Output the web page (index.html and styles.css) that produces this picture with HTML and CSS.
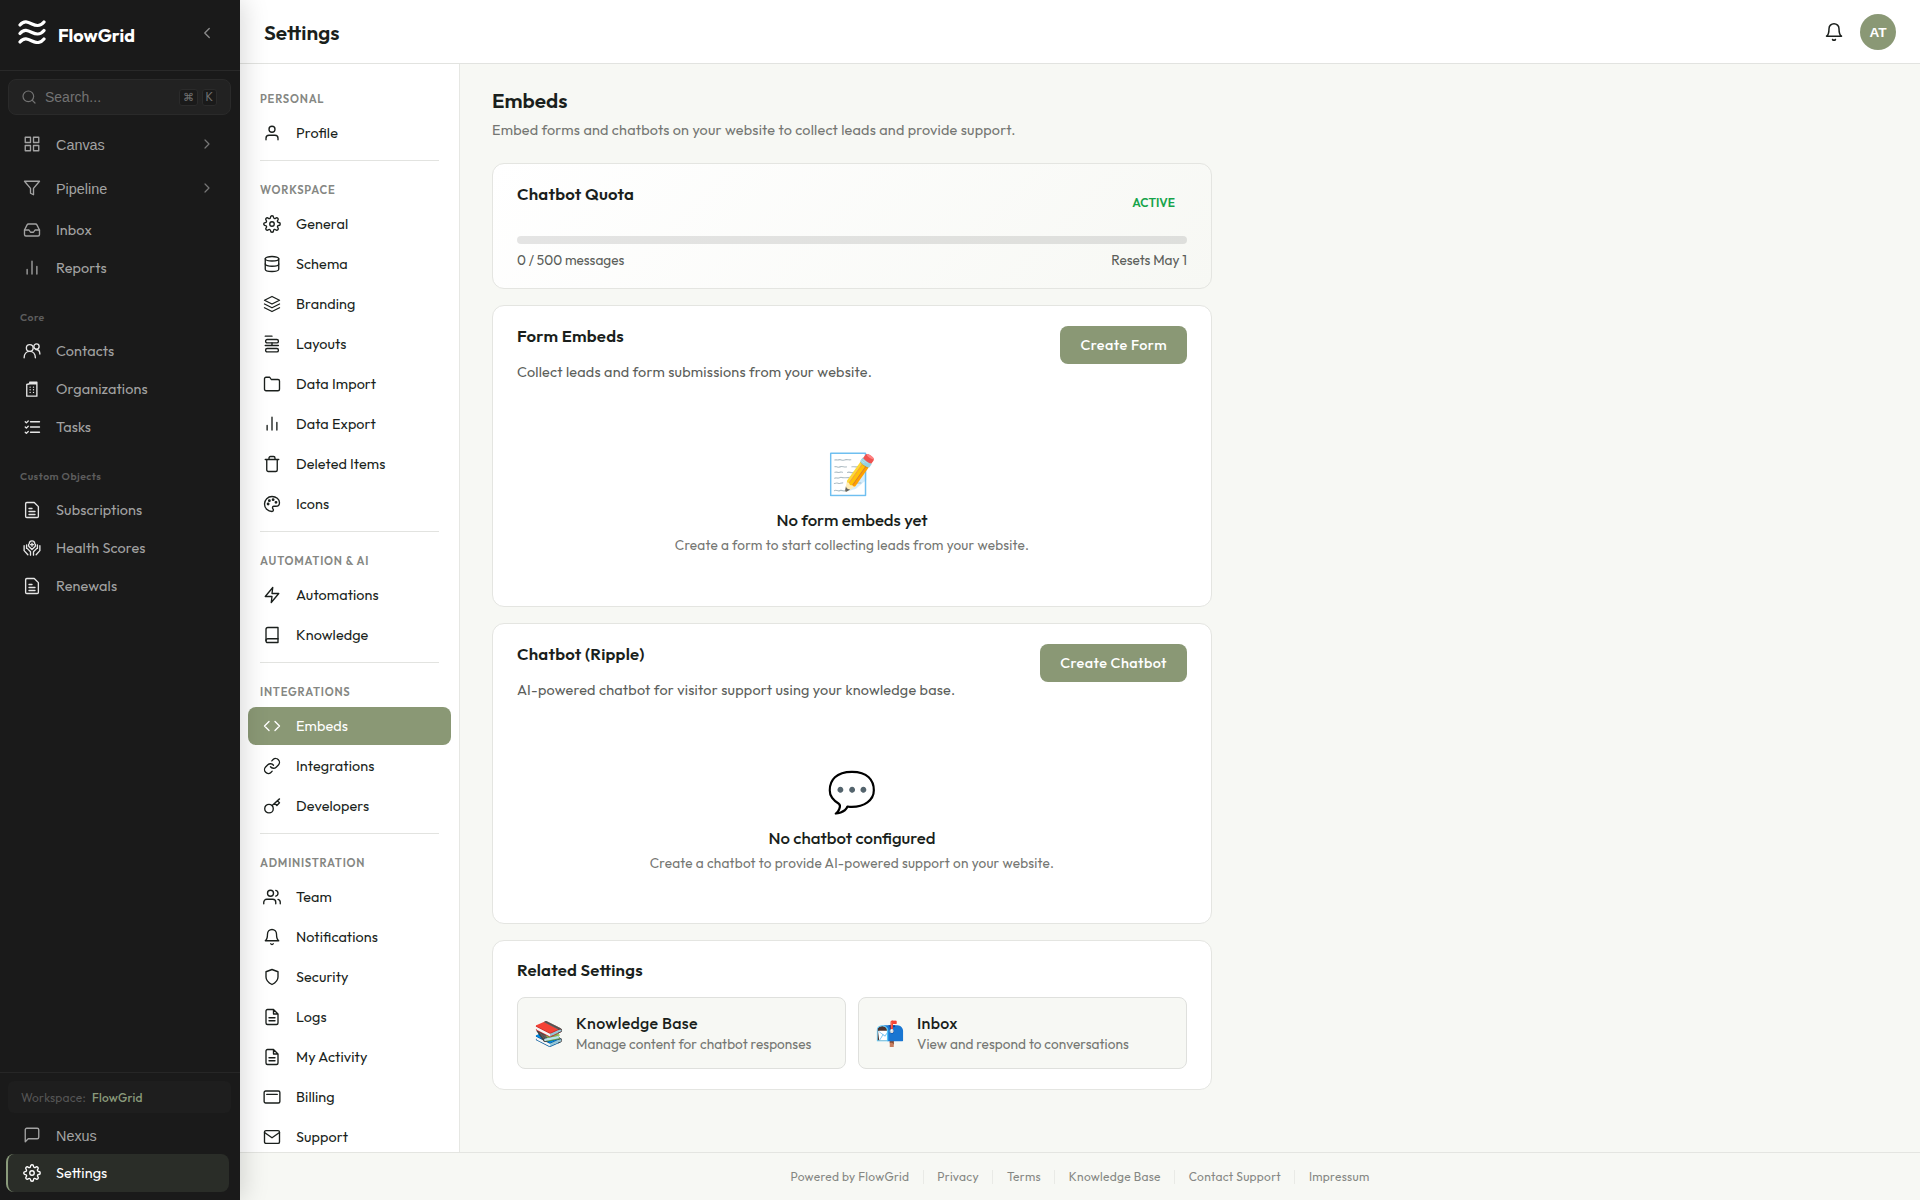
FILE: index.html
```html
<!DOCTYPE html>
<html lang="en">
<head>
<meta charset="utf-8">
<title>Settings - FlowGrid</title>
<link rel="stylesheet" href="styles.css">
</head>
<body>
<svg class="sprite" aria-hidden="true">
  <symbol id="i-search" viewBox="0 0 24 24"><circle cx="11" cy="11" r="8"/><path d="M21 21l-4.35-4.35"/></symbol>
  <symbol id="i-left" viewBox="0 0 24 24"><path d="M15 18l-6-6 6-6"/></symbol>
  <symbol id="i-right" viewBox="0 0 24 24"><path d="M9 18l6-6-6-6"/></symbol>
  <symbol id="i-grid" viewBox="0 0 24 24"><path d="M3 3h7v7H3zM14 3h7v7h-7zM14 14h7v7h-7zM3 14h7v7H3z"/></symbol>
  <symbol id="i-filter" viewBox="0 0 24 24"><path d="M22 3H2l8 9.460V19l4 2v-8.540z"/></symbol>
  <symbol id="i-inbox" viewBox="0 0 24 24"><path d="M22 12h-6l-2 3h-4l-2-3H2"/><path d="M5.450 5.110L2 12v6a2 2 0 0 0 2 2h16a2 2 0 0 0 2-2v-6l-3.450-6.890A2 2 0 0 0 16.760 4H7.240a2 2 0 0 0-1.790 1.110z"/></symbol>
  <symbol id="i-bars" viewBox="0 0 24 24"><path d="M18.500 20V10M12 20V3M5.500 20v-6"/></symbol>
  <symbol id="i-contacts" viewBox="0 0 24 24"><circle cx="9" cy="8" r="4.500"/><path d="M1.500 21c0-5 3-8.500 7.500-8.500s7.500 3.500 7.500 8.500"/><circle cx="18" cy="6" r="3.500"/><path d="M17 10c3.500 0 5.500 2 5.500 6"/></symbol>
  <symbol id="i-building" viewBox="0 0 24 24"><path d="M5 6l4-1V3h9.500v18.500h-13.500zM9 5h9"/><path d="M9.500 9.500v.01M14 9.500v.01M9.500 13v.01M14 13v.01M9.500 16.500v.01M14 16.500v.01"/></symbol>
  <symbol id="i-tasks" viewBox="0 0 24 24"><path d="M10 5h12M10 12h12M10 19h12M3 5l1.500 1.500L7 4M3 12l1.500 1.500L7 11M3 19l1.500 1.500L7 18"/></symbol>
  <symbol id="i-doc" viewBox="0 0 24 24"><path d="M15 2H5a1.500 1.500 0 0 0-1.500 1.500v17A1.500 1.500 0 0 0 5 22h14a1.500 1.500 0 0 0 1.500-1.500V7.500z"/><path d="M8 10h4M8 14h8M8 18h8"/></symbol>
  <symbol id="i-health" viewBox="0 0 24 24"><path d="M12 14l-3.800-3.800a2.900 2.900 0 0 1 .2-4.300q.3-3.400 3.600-3.400t3.600 3.400a2.900 2.900 0 0 1 .2 4.300z"/><path d="M12 5.500v4M10 7.500h4"/><path d="M1.500 9v6.500l5 5.500M10 21.500v-4.500l-4.500-4.500M4.800 8v4.500M22.500 9v6.500l-5 5.500M14 21.500v-4.500l4.500-4.500M19.200 8v4.500"/></symbol>
  <symbol id="i-message" viewBox="0 0 24 24"><path d="M21 15a2 2 0 0 1-2 2H7l-4 4V5a2 2 0 0 1 2-2h14a2 2 0 0 1 2 2z"/></symbol>
  <symbol id="i-cog" viewBox="0 0 24 24"><circle cx="12" cy="12" r="3"/><path d="M19.400 15a1.650 1.650 0 0 0 .33 1.820l.06.06a2 2 0 0 1 0 2.830 2 2 0 0 1-2.830 0l-.06-.06a1.650 1.650 0 0 0-1.820-.33 1.650 1.650 0 0 0-1 1.510V21a2 2 0 0 1-2 2 2 2 0 0 1-2-2v-.09A1.650 1.650 0 0 0 9 19.400a1.650 1.650 0 0 0-1.820.33l-.06.06a2 2 0 0 1-2.830 0 2 2 0 0 1 0-2.830l.06-.06a1.650 1.650 0 0 0 .33-1.820 1.650 1.650 0 0 0-1.510-1H3a2 2 0 0 1-2-2 2 2 0 0 1 2-2h.09A1.650 1.650 0 0 0 4.600 9a1.650 1.650 0 0 0-.33-1.820l-.06-.06a2 2 0 0 1 0-2.830 2 2 0 0 1 2.830 0l.06.06a1.650 1.650 0 0 0 1.820.33H9a1.650 1.650 0 0 0 1-1.510V3a2 2 0 0 1 2-2 2 2 0 0 1 2 2v.09a1.650 1.650 0 0 0 1 1.510 1.650 1.650 0 0 0 1.820-.33l.06-.06a2 2 0 0 1 2.830 0 2 2 0 0 1 0 2.830l-.06.06a1.650 1.650 0 0 0-.33 1.820V9a1.650 1.650 0 0 0 1.510 1H21a2 2 0 0 1 2 2 2 2 0 0 1-2 2h-.09a1.650 1.650 0 0 0-1.510 1z"/></symbol>
  <symbol id="i-user" viewBox="0 0 24 24"><path d="M20 21v-2a4 4 0 0 0-4-4H8a4 4 0 0 0-4 4v2"/><circle cx="12" cy="7" r="4"/></symbol>
  <symbol id="i-db" viewBox="0 0 24 24"><ellipse cx="12" cy="5" rx="9" ry="3"/><path d="M21 12c0 1.660-4 3-9 3s-9-1.340-9-3"/><path d="M3 5v14c0 1.660 4 3 9 3s9-1.340 9-3V5"/></symbol>
  <symbol id="i-layers" viewBox="0 0 24 24"><path d="M12 2L2 7l10 5 10-5zM2 17l10 5 10-5M2 12l10 5 10-5"/></symbol>
  <symbol id="i-layouts" viewBox="0 0 24 24"><path d="M3 1.500h9"/><rect x="3.500" y="6" width="17" height="4.500" rx="2"/><path d="M3 14h8M12 10.500V14h8.500"/><rect x="3.500" y="18" width="17" height="4.500" rx="2"/></symbol>
  <symbol id="i-folder" viewBox="0 0 24 24"><path d="M22 19a2 2 0 0 1-2 2H4a2 2 0 0 1-2-2V5a2 2 0 0 1 2-2h5l2 3h9a2 2 0 0 1 2 2z"/></symbol>
  <symbol id="i-trash" viewBox="0 0 24 24"><path d="M3 6h18M19 6v14a2 2 0 0 1-2 2H7a2 2 0 0 1-2-2V6m3 0V4a2 2 0 0 1 2-2h4a2 2 0 0 1 2 2v2"/></symbol>
  <symbol id="i-palette" viewBox="0 0 24 24"><path d="M12 2C6.500 2 2 6.500 2 12s4.500 10 10 10c1.100 0 1.900-.9 1.900-1.900 0-1.400-1.300-1.700-1.300-3.100 0-1.100.9-2 2-2H17c3 0 5-2 5-4.700C22 5.800 17.500 2 12 2z"/><circle cx="6.800" cy="12" r="1"/><circle cx="8.500" cy="7.500" r="1"/><circle cx="13.500" cy="6.200" r="1"/><circle cx="17.300" cy="9.800" r="1"/></symbol>
  <symbol id="i-zap" viewBox="0 0 24 24"><path d="M13 2L3 14h9l-1 8 10-12h-9z"/></symbol>
  <symbol id="i-book" viewBox="0 0 24 24"><path d="M4 19.500A2.500 2.500 0 0 1 6.500 17H20"/><path d="M6.500 2H20v20H6.500A2.500 2.500 0 0 1 4 19.500v-15A2.500 2.500 0 0 1 6.500 2z"/></symbol>
  <symbol id="i-code" viewBox="0 0 24 24"><path d="M16 18l6-6-6-6M8 6l-6 6 6 6"/></symbol>
  <symbol id="i-link" viewBox="0 0 24 24"><path d="M10 13a5 5 0 0 0 7.540.54l3-3a5 5 0 0 0-7.070-7.070l-1.720 1.710"/><path d="M14 11a5 5 0 0 0-7.540-.54l-3 3a5 5 0 0 0 7.070 7.070l1.710-1.710"/></symbol>
  <symbol id="i-key" viewBox="0 0 24 24"><circle cx="8" cy="15.500" r="5.700"/><path d="M12.200 11.300L22 2.500M15.500 8.300l3 3L22 7.800l-3-2.800"/></symbol>
  <symbol id="i-users" viewBox="0 0 24 24"><path d="M17 21v-2a4 4 0 0 0-4-4H5a4 4 0 0 0-4 4v2"/><circle cx="10" cy="7" r="4"/><path d="M23 21v-2a4 4 0 0 0-3-3.870M17 3.130a4 4 0 0 1 0 7.750"/></symbol>
  <symbol id="i-bell" viewBox="0 0 24 24"><path d="M18 8A6 6 0 0 0 6 8c0 7-3 9-3 9h18s-3-2-3-9M13.730 21a2 2 0 0 1-3.460 0"/></symbol>
  <symbol id="i-shield" viewBox="0 0 24 24"><path d="M12 22s8-4 8-10V5l-8-3-8 3v7c0 6 8 10 8 10z"/></symbol>
  <symbol id="i-file" viewBox="0 0 24 24"><path d="M14 2H6a2 2 0 0 0-2 2v16a2 2 0 0 0 2 2h12a2 2 0 0 0 2-2V8zM14 2v6h6M16 13H8M16 17H8"/></symbol>
  <symbol id="i-card" viewBox="0 0 24 24"><rect x="1.500" y="4" width="21" height="16" rx="2"/><path d="M5 8.500h14"/></symbol>
  <symbol id="i-mail" viewBox="0 0 24 24"><rect x="2" y="3.500" width="20" height="17" rx="2"/><path d="M22 6l-10 7L2 6"/></symbol>
</svg>

<div class="app">
  <aside class="sidebar">
    <div class="brand">
      <svg class="logo" viewBox="0 0 28 24"><path d="M2 5C6 0 10 2 14 4s8 3 12-2M2 13.500c4-5 8-3 12-1s8 3 12-2M2 22c4-5 8-3 12-1s8 3 12-2"/></svg>
      <span class="brand-name">FlowGrid</span>
      <svg class="icon collapse"><use href="#i-left"/></svg>
    </div>
    <div class="search">
      <svg class="icon"><use href="#i-search"/></svg>
      <span class="search-text">Search...</span>
      <kbd>⌘</kbd><kbd>K</kbd>
    </div>
    <nav class="nav">
      <a class="nav-item tall"><svg class="icon"><use href="#i-grid"/></svg><span>Canvas</span><svg class="icon more"><use href="#i-right"/></svg></a>
      <a class="nav-item tall"><svg class="icon"><use href="#i-filter"/></svg><span>Pipeline</span><svg class="icon more"><use href="#i-right"/></svg></a>
      <a class="nav-item"><svg class="icon"><use href="#i-inbox"/></svg><span>Inbox</span></a>
      <a class="nav-item"><svg class="icon"><use href="#i-bars"/></svg><span>Reports</span></a>
      <h2 class="nav-label">Core</h2>
      <a class="nav-item object"><svg class="icon"><use href="#i-contacts"/></svg><span>Contacts</span></a>
      <a class="nav-item object"><svg class="icon"><use href="#i-building"/></svg><span>Organizations</span></a>
      <a class="nav-item object"><svg class="icon"><use href="#i-tasks"/></svg><span>Tasks</span></a>
      <h2 class="nav-label">Custom Objects</h2>
      <a class="nav-item object"><svg class="icon"><use href="#i-doc"/></svg><span>Subscriptions</span></a>
      <a class="nav-item object"><svg class="icon"><use href="#i-health"/></svg><span>Health Scores</span></a>
      <a class="nav-item object"><svg class="icon"><use href="#i-doc"/></svg><span>Renewals</span></a>
    </nav>
    <div class="sidebar-foot">
      <div class="workspace"><span>Workspace:</span><b>FlowGrid</b></div>
      <a class="nav-item nexus"><svg class="icon"><use href="#i-message"/></svg><span>Nexus</span></a>
      <a class="nav-item current"><svg class="icon"><use href="#i-cog"/></svg><span>Settings</span></a>
    </div>
  </aside>

  <div class="main">
    <header class="topbar">
      <h1>Settings</h1>
      <svg class="icon bell"><use href="#i-bell"/></svg>
      <span class="avatar">AT</span>
    </header>
    <div class="body">
      <nav class="settings-nav">
        <section>
          <h2>Personal</h2>
          <a><svg class="icon"><use href="#i-user"/></svg><span>Profile</span></a>
        </section>
        <section>
          <h2>Workspace</h2>
          <a><svg class="icon"><use href="#i-cog"/></svg><span>General</span></a>
          <a><svg class="icon"><use href="#i-db"/></svg><span>Schema</span></a>
          <a><svg class="icon"><use href="#i-layers"/></svg><span>Branding</span></a>
          <a><svg class="icon"><use href="#i-layouts"/></svg><span>Layouts</span></a>
          <a><svg class="icon"><use href="#i-folder"/></svg><span>Data Import</span></a>
          <a><svg class="icon"><use href="#i-bars"/></svg><span>Data Export</span></a>
          <a><svg class="icon"><use href="#i-trash"/></svg><span>Deleted Items</span></a>
          <a><svg class="icon"><use href="#i-palette"/></svg><span>Icons</span></a>
        </section>
        <section>
          <h2>Automation &amp; AI</h2>
          <a><svg class="icon"><use href="#i-zap"/></svg><span>Automations</span></a>
          <a><svg class="icon"><use href="#i-book"/></svg><span>Knowledge</span></a>
        </section>
        <section>
          <h2>Integrations</h2>
          <a class="selected"><svg class="icon"><use href="#i-code"/></svg><span>Embeds</span></a>
          <a><svg class="icon"><use href="#i-link"/></svg><span>Integrations</span></a>
          <a><svg class="icon"><use href="#i-key"/></svg><span>Developers</span></a>
        </section>
        <section>
          <h2>Administration</h2>
          <a><svg class="icon"><use href="#i-users"/></svg><span>Team</span></a>
          <a><svg class="icon"><use href="#i-bell"/></svg><span>Notifications</span></a>
          <a><svg class="icon"><use href="#i-shield"/></svg><span>Security</span></a>
          <a><svg class="icon"><use href="#i-file"/></svg><span>Logs</span></a>
          <a><svg class="icon"><use href="#i-file"/></svg><span>My Activity</span></a>
          <a><svg class="icon"><use href="#i-card"/></svg><span>Billing</span></a>
          <a><svg class="icon"><use href="#i-mail"/></svg><span>Support</span></a>
        </section>
      </nav>
      <main class="content">
        <h2 class="page-title">Embeds</h2>
        <p class="page-sub">Embed forms and chatbots on your website to collect leads and provide support.</p>

        <section class="card quota">
          <div class="card-head">
            <h3>Chatbot Quota</h3>
            <span class="status">Active</span>
          </div>
          <div class="meter"></div>
          <div class="meter-labels"><span>0 / 500 messages</span><span>Resets May 1</span></div>
        </section>

        <section class="card embed">
          <div class="card-head">
            <h3>Form Embeds</h3>
            <button>Create Form</button>
          </div>
          <p class="card-sub">Collect leads and form submissions from your website.</p>
          <div class="empty">
            <span class="emoji">📝</span>
            <h4>No form embeds yet</h4>
            <p>Create a form to start collecting leads from your website.</p>
          </div>
        </section>

        <section class="card embed">
          <div class="card-head">
            <h3>Chatbot (Ripple)</h3>
            <button>Create Chatbot</button>
          </div>
          <p class="card-sub">AI-powered chatbot for visitor support using your knowledge base.</p>
          <div class="empty">
            <span class="emoji">💬</span>
            <h4>No chatbot configured</h4>
            <p>Create a chatbot to provide AI-powered support on your website.</p>
          </div>
        </section>

        <section class="card related">
          <h3>Related Settings</h3>
          <div class="links">
            <a class="link"><span class="emoji">📚</span><span class="link-text"><b>Knowledge Base</b><small>Manage content for chatbot responses</small></span></a>
            <a class="link"><span class="emoji">📬</span><span class="link-text"><b>Inbox</b><small>View and respond to conversations</small></span></a>
          </div>
        </section>
      </main>
    </div>
    <footer class="footer">
      <span>Powered by FlowGrid</span><span>Privacy</span><span>Terms</span><span>Knowledge Base</span><span>Contact Support</span><span>Impressum</span>
    </footer>
  </div>
</div>
</body>
</html>
```
FILE: styles.css
```css
* { box-sizing: border-box; margin: 0; padding: 0; }

body {
  width: 1920px;
  height: 1200px;
  overflow: hidden;
  font: 400 14.4px/20px "Outfit", "Lato", sans-serif;
  font-feature-settings: "liga" 1;
  color: #1a1f1c;
  background: #f7f8f4;
}

.sprite { display: none; }

.icon {
  width: 18px;
  height: 18px;
  flex: none;
  fill: none;
  stroke: currentColor;
  stroke-width: 1.8;
  stroke-linecap: round;
  stroke-linejoin: round;
}

.app { display: flex; height: 1200px; }

/* Sidebar */
.sidebar {
  position: relative;
  z-index: 2;
  display: flex;
  flex-direction: column;
  width: 240px;
  flex: none;
  color: #a3a3a3;
  background: #1a1a1a;
  box-shadow: 4px 0 24px rgba(0, 0, 0, 0.15);
}

.brand {
  display: flex;
  align-items: center;
  height: 71px;
  padding: 0 24px 4px 18px;
  border-bottom: 1px solid #292929;
  color: #fff;
}
.logo { width: 28px; height: 24px; margin: 0 12px 3px 0; fill: none; stroke: #fff; stroke-width: 3.2; stroke-linecap: round; }
.brand-name { font-size: 18px; font-weight: 700; padding-top: 5px; flex: 1; }
.collapse { color: #8a8a8a; }

.search {
  display: flex;
  align-items: center;
  height: 36px;
  margin: 8px 9px 7px 8px;
  padding: 0 13px 0 12px;
  border: 1px solid #2a2a2a;
  border-radius: 8px;
  background: #222;
  color: #737373;
  font: 14px/16px "Liberation Sans", sans-serif;
}
.search .icon { width: 16px; height: 16px; margin-right: 8px; }
.search-text { flex: 1; }
.search kbd {
  height: 17px;
  margin-left: 4px;
  padding: 0 3px;
  border: 1px solid #2b2b2b;
  border-radius: 3px;
  background: #1a1a1a;
  font: 11.2px/15px "Outfit", sans-serif;
}

.nav-item { display: flex; align-items: center; height: 38px; padding: 0 25px 0 23px; letter-spacing: 0.12px; }
.nav-item span { flex: 1; margin-left: 15px; }
.nav-item.tall { height: 44px; font: 14.4px/20px "Liberation Sans", sans-serif; letter-spacing: 0; }
.nav-item.tall span { padding-top: 1px; }
.nav-item.tall + .nav-item:not(.tall) { margin-top: 1px; }
.more { width: 16px; height: 16px; color: #777; }
.object .icon { color: #e5e5e5; }
.nav-label {
  height: 45px;
  padding: 21px 20px 0;
  font-size: 10.4px;
  font-weight: 600;
  letter-spacing: 0.5px;
  color: #5d5d5d;
}

.sidebar-foot { margin-top: auto; padding: 8px 9px 8px 8px; border-top: 1px solid #262626; }
.workspace {
  display: flex;
  align-items: center;
  gap: 6px;
  height: 32px;
  margin-bottom: 3px;
  padding: 1px 13px 0;
  border-radius: 6px;
  background: #1e1e1e;
  font-size: 12px;
  letter-spacing: 0.22px;
  color: #565656;
}
.workspace b { font-weight: 500; color: #8a9a7b; }
.sidebar-foot .nav-item { padding: 0 15px; }
.nexus span { padding-top: 1px; font-family: "Liberation Sans", sans-serif; letter-spacing: 0; }
.sidebar-foot .current {
  margin: 0 2px 0 -2px;
  padding-left: 15px;
  border-left: 2px solid #8a9a7b;
  border-radius: 8px;
  background: #2a2d28;
  color: #fff;
}

/* Main column */
.main { display: flex; flex-direction: column; flex: 1; }
.topbar {
  display: flex;
  align-items: center;
  height: 64px;
  padding: 0 24px;
  border-bottom: 1px solid #e2e3e0;
  background: #fff;
}
.topbar h1 { flex: 1; font-size: 20.8px; font-weight: 600; }
.bell { width: 20px; height: 20px; margin-right: 16px; }
.avatar {
  width: 36px;
  height: 36px;
  border-radius: 50%;
  background: #8a9875;
  color: #fff;
  font: 600 13.6px/37px "Liberation Sans", sans-serif;
  text-align: center;
}
.body { display: flex; height: 1088px; }

.settings-nav {
  width: 220px;
  height: 1088px;
  padding: 6px 8px 0;
  overflow: hidden;
  border-right: 1px solid #e6e7e3;
  background: #fff;
}
.settings-nav section { padding-bottom: 8px; }
.settings-nav section + section::before { content: ""; display: block; height: 1px; margin: 0 12px; background: #e2e3e0; }
.settings-nav h2 {
  height: 44px;
  padding: 19px 12px 0;
  font-size: 11.2px;
  font-weight: 600;
  letter-spacing: 0.8px;
  text-transform: uppercase;
  color: #858783;
}
.settings-nav a {
  display: flex;
  align-items: center;
  gap: 15px;
  height: 38px;
  margin-bottom: 2px;
  padding: 0 15px;
  border-radius: 8px;
  letter-spacing: 0.1px;
}
.settings-nav a:last-child { margin-bottom: 0; }
.settings-nav .selected { background: #8a9875; color: #fff; }

.content { width: 752px; padding: 22px 0 0 32px; }
.page-title { font-size: 20.8px; line-height: 28px; font-weight: 600; }
.page-sub { margin-top: 6px; color: #747672; letter-spacing: 0.2px; }

.card {
  width: 720px;
  margin-bottom: 16px;
  padding: 0 24px;
  border: 1px solid #e4e5e1;
  border-radius: 12px;
  background: #fff;
}
.card h3 { margin-top: -1px; font-size: 16.8px; line-height: 22px; font-weight: 600; letter-spacing: 0.2px; }
.card-head { display: flex; justify-content: space-between; align-items: flex-start; }

.quota { height: 126px; margin-top: 23px; padding-top: 20px; background: linear-gradient(135deg, #fff, #f7f8f4); }
.status { padding: 9px 12px 0; font-size: 12px; font-weight: 600; color: #16a34a; text-transform: uppercase; }
.meter { height: 8px; margin-top: 23px; border-radius: 4px; background: rgba(0, 0, 0, 0.1); }
.meter-labels { display: flex; justify-content: space-between; margin-top: 6px; font-size: 13.6px; color: #5b5e5a; }

.embed { height: 301.6px; padding-top: 20px; }
.card button {
  height: 38px;
  padding: 0 20px;
  border: 0;
  border-radius: 8px;
  background: #8a9875;
  color: #fff;
  font: 500 14.4px/20px "Outfit", sans-serif;
  letter-spacing: 0.45px;
}
.card-sub { margin-top: -2px; color: #5b5e5a; letter-spacing: 0.22px; }
.empty { display: flex; flex-direction: column; align-items: center; padding-top: 63px; text-align: center; }
.empty .emoji { font-size: 40px; line-height: 56px; }
.empty h4 { margin-top: 7px; font-size: 16.8px; line-height: 24px; font-weight: 500; }
.empty p { margin-top: 3px; font-size: 13.6px; letter-spacing: 0.2px; color: #747672; }

.related { height: 150px; padding-top: 19px; }
.links { display: grid; grid-template-columns: 1fr 1fr; gap: 12px; margin-top: 16px; }
.link { display: flex; align-items: center; height: 72px; padding: 0 16px; border: 1px solid #dfe0dd; border-radius: 8px; background: #f7f8f4; }
.link .emoji { width: 31px; font-size: 24px; line-height: 32px; }
.link-text { display: flex; flex-direction: column; margin-left: 11px; }
.link b { font-size: 16px; font-weight: 500; line-height: 21px; letter-spacing: 0.3px; }
.link small { font-size: 13.6px; line-height: 20px; letter-spacing: 0.06px; color: #747672; }

.footer {
  display: flex;
  justify-content: center;
  align-items: center;
  height: 48px;
  border-top: 1px solid #e4e5e1;
  color: #858783;
  font-size: 12px;
  line-height: 14px;
  letter-spacing: 0.27px;
}
.footer span { padding: 0 13.5px; }
.footer span + span { border-left: 1px solid #e9eae6; }
```
